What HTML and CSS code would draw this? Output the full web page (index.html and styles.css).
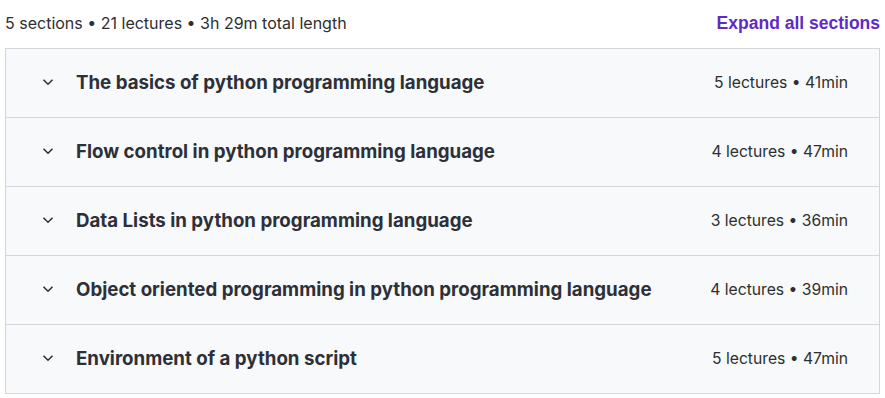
FILE: index.html
```html
<!DOCTYPE html>
<html>
<head>
<meta charset="utf-8">
<link rel="stylesheet" href="styles.css">
</head>
<body>
<div class="curriculum">
  <div class="summary">
    <span class="summary-text">5 sections • 21 lectures • 3h 29m total length</span>
    <button class="expand">Expand all sections</button>
  </div>
  <div class="panel">
    <div class="row">
      <svg class="chev" viewBox="0 0 16 16"><path d="M3.5 5.8 8 10.2 12.5 5.8" fill="none" stroke="#2d2f31" stroke-width="1.6"/></svg>
      <span class="title">The basics of python programming language</span>
      <span class="meta">5 lectures • 41min</span>
    </div>
    <div class="row">
      <svg class="chev" viewBox="0 0 16 16"><path d="M3.5 5.8 8 10.2 12.5 5.8" fill="none" stroke="#2d2f31" stroke-width="1.6"/></svg>
      <span class="title">Flow control in python programming language</span>
      <span class="meta">4 lectures • 47min</span>
    </div>
    <div class="row">
      <svg class="chev" viewBox="0 0 16 16"><path d="M3.5 5.8 8 10.2 12.5 5.8" fill="none" stroke="#2d2f31" stroke-width="1.6"/></svg>
      <span class="title">Data Lists in python programming language</span>
      <span class="meta">3 lectures • 36min</span>
    </div>
    <div class="row">
      <svg class="chev" viewBox="0 0 16 16"><path d="M3.5 5.8 8 10.2 12.5 5.8" fill="none" stroke="#2d2f31" stroke-width="1.6"/></svg>
      <span class="title">Object oriented programming in python programming language</span>
      <span class="meta">4 lectures • 39min</span>
    </div>
    <div class="row">
      <svg class="chev" viewBox="0 0 16 16"><path d="M3.5 5.8 8 10.2 12.5 5.8" fill="none" stroke="#2d2f31" stroke-width="1.6"/></svg>
      <span class="title">Environment of a python script</span>
      <span class="meta">5 lectures • 47min</span>
    </div>
  </div>
</div>
</body>
</html>
```
FILE: styles.css
```css
html, body {
  margin: 0;
  padding: 0;
  background: #ffffff;
}
body {
  font-family: Inter, "Noto Sans", sans-serif;
  color: #2d2f31;
}
.curriculum {
  padding: 0 5px;
}
.summary {
  display: flex;
  justify-content: space-between;
  align-items: center;
  height: 46px;
  padding-bottom: 2px;
}
.summary-text {
  font-size: 16px;
  color: #2d2f31;
}
.expand {
  background: none;
  border: none;
  padding: 0;
  font-family: "Liberation Sans", Arial, sans-serif;
  font-weight: 700;
  font-size: 17.5px;
  color: #5f2bc6;
}
.panel {
  border: 1px solid #d1d7dc;
  border-bottom: none;
  background: #f7f9fa;
}
.row {
  display: flex;
  align-items: center;
  border-bottom: 1px solid #d1d7dc;
  padding: 0 31px 2px 34px;
  box-sizing: border-box;
  height: 69px;
}
.chev {
  width: 16px;
  height: 16px;
  flex: none;
}
.title {
  margin-left: 20px;
  font-weight: 700;
  font-size: 18.7px;
  color: #2d2f39;
  flex: 1;
}
.meta {
  font-size: 15.7px;
}
```
